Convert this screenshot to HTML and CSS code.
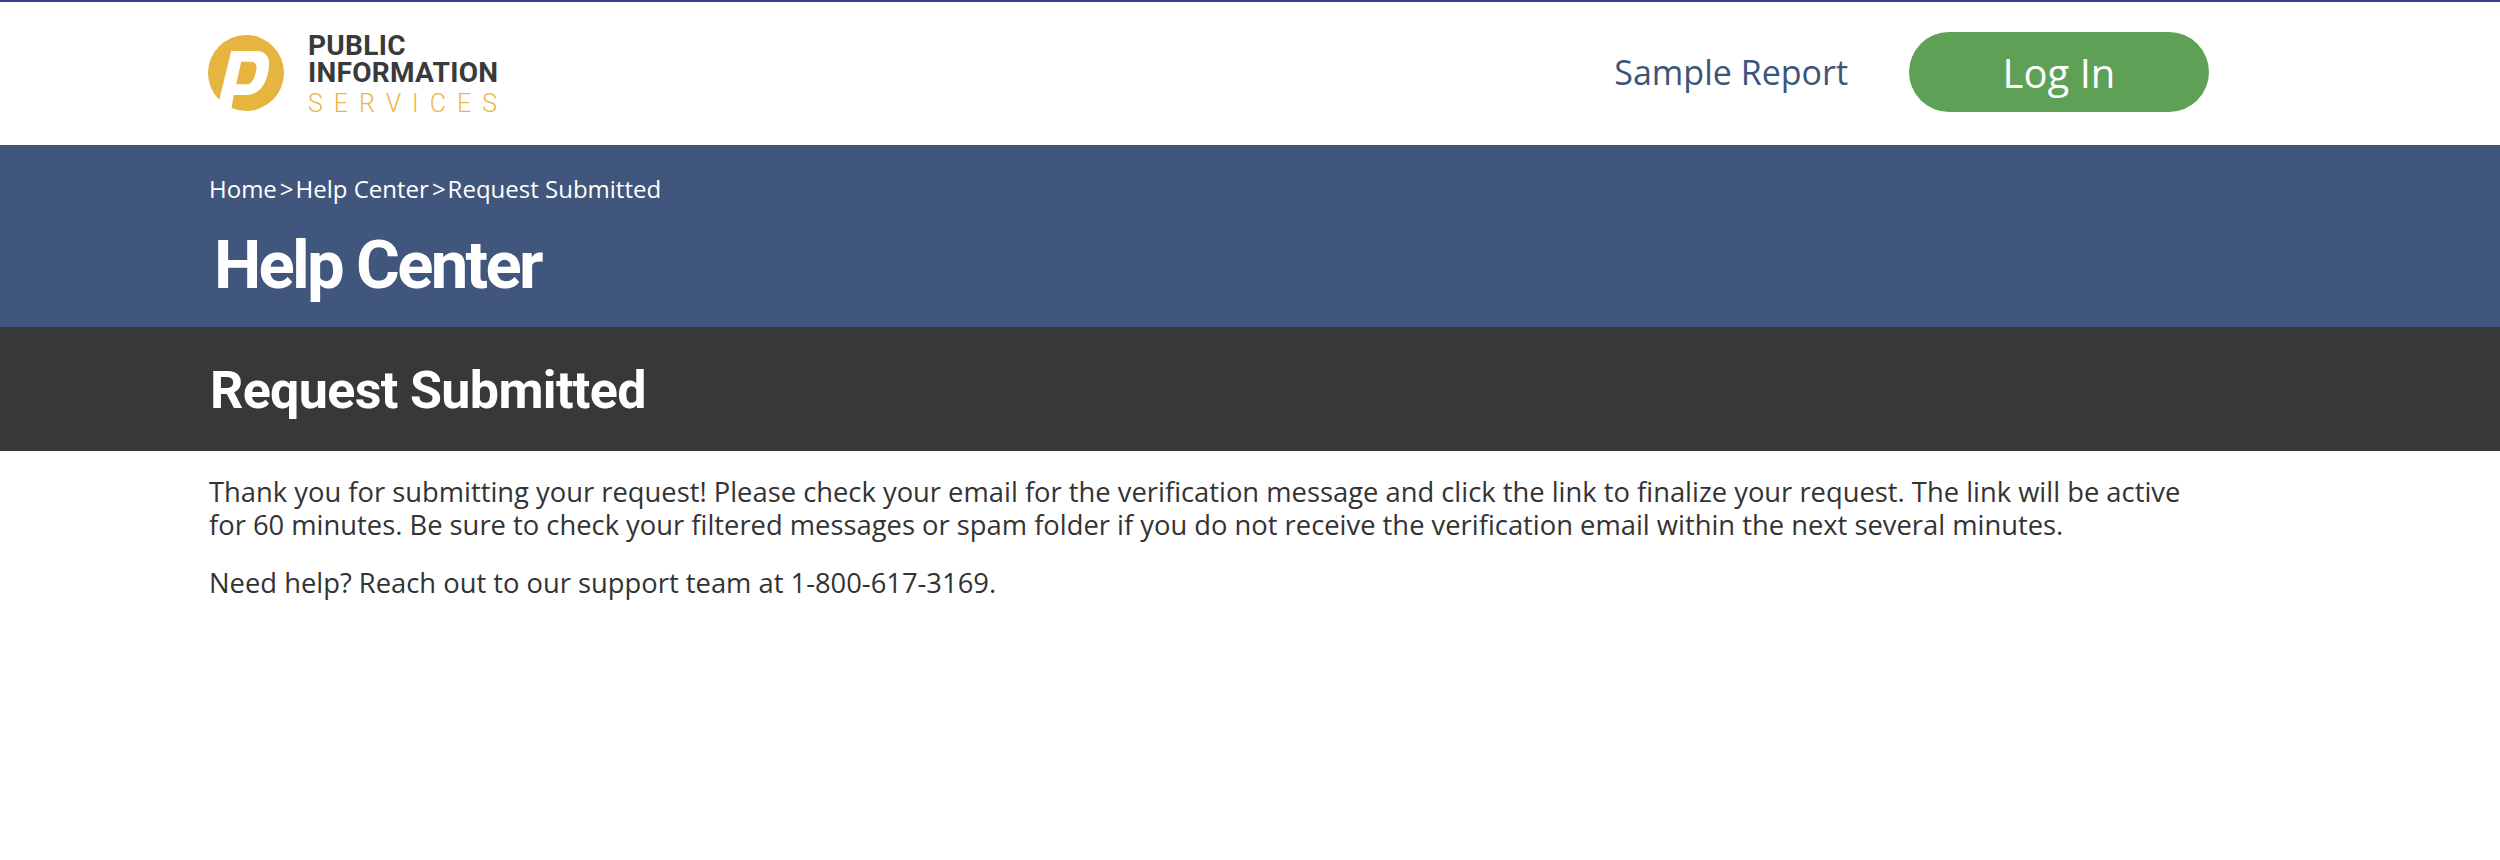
FILE: index.html
```html
<!DOCTYPE html>
<html lang="en">
<head>
    <meta charset="UTF-8">
    <title>Help Center - Request Submitted</title>
    <link rel="stylesheet" href="styles.css">
</head>
<body>

    <header class="site-header">
        <div class="logo">
            <svg class="logo-mark" viewBox="0 0 76 76">
                <circle cx="38" cy="38" r="38" fill="#e6b43f"/>
                <path fill="#fff" fill-rule="evenodd" d="M23.2 16H48C57 16 62 21 61 31C59.5 48 52 60 38 60H25.8L23 76L11 66ZM33.2 26.7L28.2 49.3H39C44 49.3 47 42 48.3 35C49.3 29.5 47 26.7 43 26.7Z"/>
            </svg>
            <div class="logo-text">
                <span class="logo-line">PUBLIC</span>
                <span class="logo-line">INFORMATION</span>
                <span class="logo-services">SERVICES</span>
            </div>
        </div>
        <nav class="header-nav">
            <a class="sample-link" href="#">Sample Report</a>
            <a class="login-btn" href="#">Log In</a>
        </nav>
    </header>

    <section class="banner">
        <div class="breadcrumb">
            <a href="#">Home</a><span class="sep">&gt;</span><a href="#">Help Center</a><span class="sep">&gt;</span><span>Request Submitted</span>
        </div>
        <h1>Help Center</h1>
    </section>

    <section class="subhead">
        <h2>Request Submitted</h2>
    </section>

    <main class="content">
        <p>Thank you for submitting your request! Please check your email for the verification message and click the link to finalize your request. The link will be active for 60 minutes. Be sure to check your filtered messages or spam folder if you do not receive the verification email within the next several minutes.</p>
        <p>Need help? Reach out to our support team at 1-800-617-3169.</p>
    </main>

</body>
</html>
```

FILE: styles.css
```css
body {
    margin: 0;
    font-family: "Open Sans", "Noto Sans", sans-serif;
    background: #fff;
    color: #333;
}

a {
    color: inherit;
    text-decoration: none;
}

.site-header {
    height: 145px;
    box-sizing: border-box;
    border-top: 2px solid #3c3f8a;
    padding: 0 291px 3px 208px;
    display: flex;
    justify-content: space-between;
    align-items: center;
}

.logo {
    display: flex;
    align-items: center;
    gap: 24px;
}

.logo-mark {
    width: 76px;
    height: 76px;
    margin-top: 2px;
}

.logo-text {
    display: flex;
    flex-direction: column;
    font-family: Roboto, sans-serif;
    margin-top: 9px;
}

.logo-line {
    font-size: 28px;
    line-height: 27px;
    font-weight: 700;
    color: #3a3a3a;
    letter-spacing: 0.3px;
}

.logo-services {
    font-size: 25px;
    line-height: 35px;
    font-weight: 300;
    color: #e9b746;
    letter-spacing: 11px;
}

.header-nav {
    display: flex;
    align-items: center;
    gap: 61px;
}

.sample-link {
    font-size: 34px;
    color: #3d5479;
}

.login-btn {
    width: 300px;
    height: 80px;
    border-radius: 40px;
    background: #5ea156;
    color: #fff;
    font-size: 40px;
    display: flex;
    justify-content: center;
    align-items: center;
}

.banner {
    height: 182px;
    box-sizing: border-box;
    background: #41567c;
    color: #fff;
    padding: 27px 209px 0;
}

.breadcrumb {
    font-size: 24px;
    line-height: 33px;
}

.sep {
    margin: 0 2px 0 3px;
}

.banner h1 {
    margin: 22px 0 0 5px;
    font-family: Roboto, sans-serif;
    font-size: 67px;
    line-height: 76px;
    font-weight: 700;
    letter-spacing: -2.7px;
}

.subhead {
    height: 124px;
    box-sizing: border-box;
    background: #383838;
    color: #fff;
    padding: 3px 210px 0;
    display: flex;
    align-items: center;
}

.subhead h2 {
    margin: 0;
    font-family: Roboto, sans-serif;
    font-size: 52px;
    font-weight: 700;
    letter-spacing: -0.65px;
}

.content {
    padding: 24px 290px 0 209px;
    font-size: 27.35px;
    line-height: 33px;
}

.content p {
    margin: 0 0 25px;
}
```
